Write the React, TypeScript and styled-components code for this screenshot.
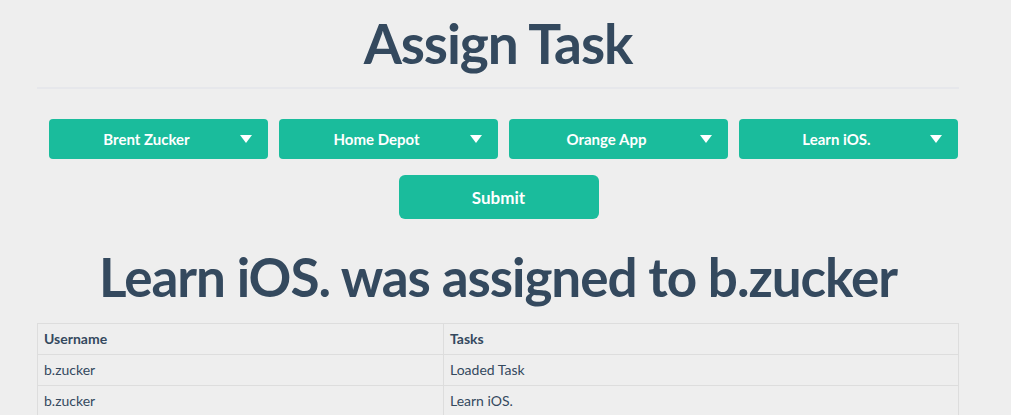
import React from "react";
import styled, { createGlobalStyle } from "styled-components";

const Global = createGlobalStyle`
  html, body { margin: 0; padding: 0; background: #eeeeee; }
  body { font-family: Lato, "Open Sans", sans-serif; color: #34495e; }
  * { box-sizing: border-box; }
`;

const Container = styled.div`
  width: 922px;
  margin-left: 37px;
  display: flex;
  flex-direction: column;
`;

const Header = styled.div`
  padding-top: 10px;
  padding-bottom: 11px;
  border-bottom: 2px solid #e6e7eb;
  display: flex;
  justify-content: center;
`;

const Title = styled.h1<{ $size: number }>`
  margin: 0;
  font-size: ${(p) => p.$size}px;
  line-height: 1.2;
  font-weight: 700;
  letter-spacing: -0.02em;
  text-align: center;
  color: #34495e;
`;

const DropRow = styled.div`
  margin-top: 30px;
  padding-left: 12px;
  display: grid;
  grid-template-columns: repeat(4, 219px);
  column-gap: 11px;
`;

const Dropdown = styled.button`
  height: 40px;
  border: none;
  border-radius: 4px;
  background: #1abc9c;
  color: #ffffff;
  font-family: Lato, sans-serif;
  font-weight: 700;
  font-size: 15px;
  padding: 0 16px;
  display: flex;
  align-items: center;
  cursor: pointer;
`;

const DropLabel = styled.span`
  flex: 1;
  text-align: center;
`;

const Caret = styled.span`
  margin-left: 12px;
  width: 0;
  height: 0;
  border-left: 6px solid transparent;
  border-right: 6px solid transparent;
  border-top: 8px solid #ffffff;
`;

const SubmitWrap = styled.div`
  margin-top: 16px;
  display: flex;
  justify-content: center;
`;

const Submit = styled.button`
  width: 200px;
  height: 44px;
  margin-left: 1px;
  border: none;
  border-radius: 6px;
  background: #1abc9c;
  color: #ffffff;
  font-family: Lato, sans-serif;
  font-weight: 700;
  font-size: 17px;
  cursor: pointer;
`;

const Result = styled.div`
  margin-top: 26px;
  display: flex;
  justify-content: center;
`;

const Table = styled.table`
  margin-top: 14px;
  width: 922px;
  border-collapse: collapse;
  font-size: 14px;
  line-height: 18px;
`;

const Th = styled.th<{ $w?: number }>`
  border: 1px solid #dddddd;
  padding: 6px 6px;
  text-align: left;
  font-weight: 700;
  width: ${(p) => (p.$w ? `${p.$w}px` : "auto")};
`;

const Td = styled.td`
  border: 1px solid #dddddd;
  padding: 6px 6px;
  text-align: left;
`;

const dropdowns = ["Brent Zucker", "Home Depot", "Orange App", "Learn iOS."];
const rows = [
  ["b.zucker", "Loaded Task"],
  ["b.zucker", "Learn iOS."],
];

export default function App() {
  return (
    <>
      <Global />
      <Container>
        <Header>
          <Title $size={55}>Assign Task</Title>
        </Header>
        <DropRow>
          {dropdowns.map((d) => (
            <Dropdown key={d}>
              <DropLabel>{d}</DropLabel>
              <Caret />
            </Dropdown>
          ))}
        </DropRow>
        <SubmitWrap>
          <Submit>Submit</Submit>
        </SubmitWrap>
        <Result>
          <Title $size={53}>Learn iOS. was assigned to b.zucker</Title>
        </Result>
        <Table>
          <thead>
            <tr>
              <Th $w={406}>Username</Th>
              <Th>Tasks</Th>
            </tr>
          </thead>
          <tbody>
            {rows.map((r, i) => (
              <tr key={i}>
                <Td>{r[0]}</Td>
                <Td>{r[1]}</Td>
              </tr>
            ))}
          </tbody>
        </Table>
      </Container>
    </>
  );
}
